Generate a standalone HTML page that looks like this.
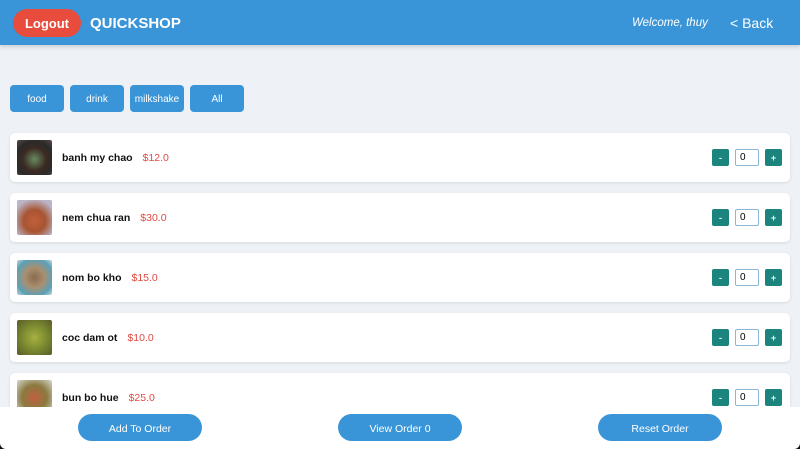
<!DOCTYPE html>
<html><head><meta charset="utf-8"><style>
*{margin:0;padding:0;box-sizing:border-box}
body{width:800px;height:449px;overflow:hidden;background:#eef1f6;font-family:"Liberation Sans",Arial,sans-serif;position:relative}
.hdr{position:absolute;left:0;top:0;width:800px;height:45px;background:#3a95d8;box-shadow:0 2px 4px rgba(0,0,0,.15)}
.logout{position:absolute;left:13px;top:9px;width:68px;height:28px;border-radius:14px;background:#e74c3c;color:#fff;font-weight:bold;font-size:13px;line-height:29px;text-align:center}
.title{position:absolute;left:90px;top:15px;color:#fff;font-weight:bold;font-size:15px}
.wel{position:absolute;left:632px;top:17px;color:#fff;font-style:italic;font-size:11.5px}
.back{position:absolute;left:730px;top:15px;color:#fff;font-size:14px}
.f{position:absolute;top:85px;width:54px;height:27px;border-radius:4px;background:#3a95d8;color:#fff;font-size:10px;line-height:29px;text-align:center}
.card{position:absolute;left:10px;width:780px;height:49px;background:#fff;border-radius:5px;box-shadow:0 1px 3px rgba(0,0,0,.1)}
.img{position:absolute;left:7px;top:7px;width:35px;height:35px;border-radius:2px}
.row{position:absolute;left:52px;top:19px;font-size:10.5px;display:flex;gap:10px;white-space:nowrap}
.nm{font-weight:bold;color:#111}
.pr{color:#e04a43}
.b{position:absolute;top:16px;width:17px;height:17px;border-radius:2px;background:#1b847c;color:#fff;font-size:9px;font-weight:bold;line-height:18px;text-align:center}
.in{position:absolute;left:725px;top:16px;width:24px;height:17px;border:1px solid #8bb6d6;border-radius:2px;font-size:10px;line-height:15px;padding-left:4px;background:#fff}
.bar{position:absolute;left:0;top:407px;width:800px;height:42px;background:#fff;border-radius:0 0 6px 6px}
.corner{position:absolute;top:439px;width:10px;height:10px;background:#111}
.bb{position:absolute;top:7px;width:124px;height:27px;border-radius:14px;background:#3a95d8;color:#fff;font-size:10.5px;line-height:30px;text-align:center}
</style></head><body>
<div class="hdr">
<div class="logout">Logout</div>
<div class="title">QUICKSHOP</div>
<div class="wel">Welcome, thuy</div>
<div class="back">&lt; Back</div>
</div>
<div class="f" style="left:10px">food</div>
<div class="f" style="left:70px">drink</div>
<div class="f" style="left:130px">milkshake</div>
<div class="f" style="left:190px">All</div>

<div class="card" style="top:133px"><div class="img" style="background:radial-gradient(circle at 50% 55%,#6a8a60 0,#3b2a22 45%,#2a2a2a 70%,#5b4a48 100%)"></div><div class="row"><span class="nm">banh my chao</span><span class="pr">$12.0</span></div><div class="b" style="left:702px">-</div><div class="in">0</div><div class="b" style="left:755px">+</div></div>
<div class="card" style="top:193px"><div class="img" style="background:radial-gradient(circle at 50% 60%,#c0603a 0,#a85432 40%,#b9b4c6 80%)"></div><div class="row"><span class="nm">nem chua ran</span><span class="pr">$30.0</span></div><div class="b" style="left:702px">-</div><div class="in">0</div><div class="b" style="left:755px">+</div></div>
<div class="card" style="top:253px"><div class="img" style="background:radial-gradient(circle at 50% 50%,#8a6a50 0,#a89070 40%,#5aa0b8 75%,#c8d8d8 100%)"></div><div class="row"><span class="nm">nom bo kho</span><span class="pr">$15.0</span></div><div class="b" style="left:702px">-</div><div class="in">0</div><div class="b" style="left:755px">+</div></div>
<div class="card" style="top:313px"><div class="img" style="background:radial-gradient(circle at 50% 50%,#a8b040 0,#7a8a30 50%,#5a5a28 100%)"></div><div class="row"><span class="nm">coc dam ot</span><span class="pr">$10.0</span></div><div class="b" style="left:702px">-</div><div class="in">0</div><div class="b" style="left:755px">+</div></div>
<div class="card" style="top:373px"><div class="img" style="background:radial-gradient(circle at 50% 50%,#c06040 0,#8a7a40 50%,#d8d8d0 100%)"></div><div class="row"><span class="nm">bun bo hue</span><span class="pr">$25.0</span></div><div class="b" style="left:702px">-</div><div class="in">0</div><div class="b" style="left:755px">+</div></div>

<div class="corner" style="left:0"></div><div class="corner" style="right:0"></div>
<div class="bar">
<div class="bb" style="left:78px">Add To Order</div>
<div class="bb" style="left:338px">View Order 0</div>
<div class="bb" style="left:598px">Reset Order</div>
</div>
</body></html>
